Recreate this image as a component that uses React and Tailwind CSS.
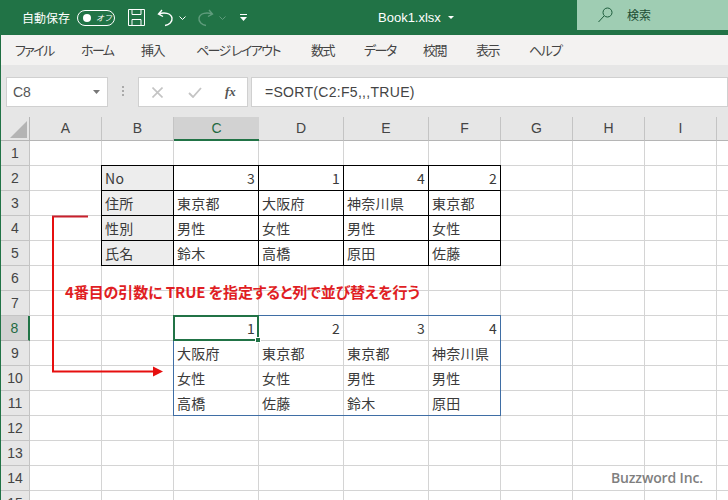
const COLS = ['A', 'B', 'C', 'D', 'E', 'F', 'G', 'H', 'I', '']
const ROWS = [1, 2, 3, 4, 5, 6, 7, 8, 9, 10, 11, 12, 13, 14, 15]
const TABS = [
  { label: 'ファイル', w: 'w-[38px]' },
  { label: 'ホーム', w: 'w-[32px]' },
  { label: '挿入', w: 'w-[27px]' },
  { label: 'ページ レイアウト', w: 'w-[87px]' },
  { label: '数式', w: 'w-[25px]' },
  { label: 'データ', w: 'w-[31px]' },
  { label: '校閲', w: 'w-[25px]' },
  { label: '表示', w: 'w-[25px]' },
  { label: 'ヘルプ', w: 'w-[32px]' },
]
const GRID = 'grid grid-cols-[29px_72px_72px_85px_85px_85px_72px_72px_72px_72px_12px] grid-rows-[24px_repeat(15,25px)]'

const CELLS = {
  '2-B': 'No', '2-C': 3, '2-D': 1, '2-E': 4, '2-F': 2,
  '3-B': '住所', '3-C': '東京都', '3-D': '大阪府', '3-E': '神奈川県', '3-F': '東京都',
  '4-B': '性別', '4-C': '男性', '4-D': '女性', '4-E': '男性', '4-F': '女性',
  '5-B': '氏名', '5-C': '鈴木', '5-D': '高橋', '5-E': '原田', '5-F': '佐藤',
  '8-C': 1, '8-D': 2, '8-E': 3, '8-F': 4,
  '9-C': '大阪府', '9-D': '東京都', '9-E': '東京都', '9-F': '神奈川県',
  '10-C': '女性', '10-D': '女性', '10-E': '男性', '10-F': '男性',
  '11-C': '高橋', '11-D': '佐藤', '11-E': '鈴木', '11-F': '原田',
}

function Cell({ row, col }) {
  const value = CELLS[`${row}-${col}`]
  const inTop = row >= 2 && row <= 5 && ['B', 'C', 'D', 'E', 'F'].includes(col)
  const isLabel = inTop && col === 'B'
  return (
    <div
      className={`flex items-center overflow-hidden whitespace-nowrap px-[3px] text-[14px] tracking-[0.3px] text-[#3a3a3a] ${
        inTop ? 'border-r border-b border-black' : 'border-r border-b border-[#d4d4d4]'
      } ${isLabel ? 'bg-[#ededed]' : 'bg-white'} ${typeof value === 'number' ? 'justify-end' : ''}`}
    >
      {value}
    </div>
  )
}

function TitleBar() {
  return (
    <div className="flex h-[35px] items-center bg-[#217346] text-white">
      <span className="ml-[22px] w-[48px] whitespace-nowrap text-[12px] [font-feature-settings:'palt']">自動保存</span>
      <div className="ml-[7px] flex h-[16px] w-[38px] items-center rounded-full border border-white pl-[5px]">
        <span className="h-[8px] w-[8px] rounded-full bg-white" />
        <span className="ml-[5px] text-[8px] italic leading-none">オフ</span>
      </div>
      <svg className="ml-[13px]" width="17" height="17" viewBox="0 0 17 17" fill="none" stroke="#fff" strokeWidth="1">
        <path d="M.5.5h16v16H.5zM4 .5v5h9v-5M4 16.5v-6h9v6" />
      </svg>
      <svg className="ml-[12px]" width="17" height="18" viewBox="0 0 17 18" fill="none" stroke="#fff" strokeWidth="1.4">
        <path d="M5 1 1.500 5 6 7.500M2 5c5-2 12-1 13 4 .6 4-3 7-7 7.500" />
      </svg>
      <svg className="ml-[5px]" width="7" height="4" viewBox="0 0 7 4" fill="none" stroke="#fff">
        <path d="m.5.5 3 3 3-3" />
      </svg>
      <svg className="ml-[11px]" width="17" height="18" viewBox="0 0 17 18" fill="none" stroke="#5f9c7c" strokeWidth="1.4">
        <path d="M12 1l3.500 4L11 7.500M15 5C10 3 3 4 2 9c-.6 4 3 7 7 7.500" />
      </svg>
      <svg className="ml-[5px]" width="7" height="4" viewBox="0 0 7 4" fill="none" stroke="#5f9c7c">
        <path d="m.5.5 3 3 3-3" />
      </svg>
      <svg className="ml-[14px]" width="7" height="7" viewBox="0 0 7 7" fill="#fff">
        <path d="M0 0h7v1H0zM0 3h7L3.500 7z" />
      </svg>
      <span className="ml-[131px] font-['Liberation_Sans',sans-serif] text-[13px]">Book1.xlsx</span>
      <svg className="ml-[7px]" width="6" height="3" viewBox="0 0 6 3" fill="#fff">
        <path d="M0 0h6L3 3z" />
      </svg>
      <div className="mb-[5px] ml-[123px] flex h-[30px] flex-1 items-center self-end bg-[#9fcdb3] pl-[21px] text-[#1d4d34]">
        <svg width="15" height="16" viewBox="0 0 15 16" fill="none" stroke="#1d5c3c" strokeWidth="1">
          <circle cx="9.500" cy="5.500" r="4.500" />
          <path d="M6 9 .5 15" />
        </svg>
        <span className="ml-[14px] text-[12px]">検索</span>
      </div>
    </div>
  )
}

function TabBar() {
  return (
    <div className="flex h-[30px] items-center gap-[28px] bg-[#f3f2f1] pl-[14px] text-[13px] text-[#444] shadow-[0_2px_3px_rgba(0,0,0,0.12)] [font-feature-settings:'palt']">
      {TABS.map((t) => (
        <span key={t.label} className={`${t.w} shrink-0 whitespace-nowrap tracking-[-1.6px]`}>
          {t.label}
        </span>
      ))}
    </div>
  )
}

function FormulaBar() {
  return (
    <div className="flex h-[52px] items-start bg-[#e6e6e6] pl-[5px] pt-[12px]">
      <div className="flex h-[30px] w-[102px] items-center justify-between border border-[#d0d0d0] bg-white pl-[6px] pr-[7px] font-['Liberation_Sans',sans-serif] text-[14px] text-[#555]">
        C8
        <svg width="7" height="4" viewBox="0 0 7 4" fill="#777">
          <path d="M0 0h7L3.500 4z" />
        </svg>
      </div>
      <div className="ml-[14px] mt-[9px] flex flex-col gap-[2px]">
        <span className="h-[2px] w-[2px] bg-[#aaa]" />
        <span className="h-[2px] w-[2px] bg-[#aaa]" />
        <span className="h-[2px] w-[2px] bg-[#aaa]" />
      </div>
      <div className="ml-[14px] flex h-[30px] w-[110px] items-center border border-[#d0d0d0] bg-white">
        <svg className="ml-[13px]" width="11" height="11" viewBox="0 0 11 11" stroke="#c4c4c4" strokeWidth="1.6">
          <path d="m.5.500 10 10M10.500.5l-10 10" />
        </svg>
        <svg className="ml-[25px]" width="14" height="11" viewBox="0 0 14 11" fill="none" stroke="#c4c4c4" strokeWidth="1.8">
          <path d="m1 6 4 4 8-9" />
        </svg>
        <span className="ml-[23px] font-['Liberation_Serif',serif] text-[13px] font-bold italic text-[#555]">fx</span>
      </div>
      <div className="ml-[3px] flex h-[30px] flex-1 items-center border border-[#d0d0d0] bg-white pl-[13px] font-['Liberation_Sans',sans-serif] text-[14px] tracking-[0.3px] text-[#444]">
        =SORT(C2:F5,,,TRUE)
      </div>
    </div>
  )
}

function Sheet() {
  return (
    <div className="relative pl-[1px]">
      <div className={GRID}>
        <div className="flex items-end justify-end border-r border-b border-[#b5b5b5] bg-[#e6e6e6] p-[2px]">
          <svg width="17" height="17" viewBox="0 0 17 17" fill="#b4b4b4">
            <path d="M17 0v17H0z" />
          </svg>
        </div>
        {COLS.map((c) => (
          <div
            key={c}
            className={`flex items-center justify-center border-b font-['Liberation_Sans',sans-serif] text-[14px] ${
              c === 'C'
                ? 'border-b-2 border-b-[#217346] bg-[#d2d2d2] text-[#1f6a42]'
                : 'border-r border-b-[#b5b5b5] border-r-[#c4c4c4] bg-[#e6e6e6] text-[#444]'
            }`}
          >
            {c}
          </div>
        ))}
        {ROWS.map((r) => (
          <div key={r} className="contents">
            <div
              className={`flex items-center justify-center font-['Liberation_Sans',sans-serif] text-[14px] ${
                r === 8
                  ? 'border-r-2 border-b border-r-[#217346] border-b-[#b5b5b5] bg-[#d2d2d2] text-[#1f6a42]'
                  : 'border-r border-b border-[#c4c4c4] bg-[#e6e6e6] text-[#444]'
              }`}
            >
              {r}
            </div>
            {COLS.map((c) => (
              <Cell key={c} row={r} col={c} />
            ))}
          </div>
        ))}
      </div>

      {/* table outline, spill range and active cell sit over the cells */}
      <div className={`pointer-events-none absolute top-0 left-[1px] ${GRID}`}>
        <div className="col-start-3 col-end-8 row-start-3 row-end-7 -mt-px -ml-px border-t border-l border-black" />
        <div className="col-start-4 col-end-8 row-start-9 row-end-13 -mt-px -ml-px border border-[#3f6ea5]" />
        <div className="relative col-start-4 col-end-5 row-start-9 row-end-10 -mt-px -ml-px border-2 border-[#217346]">
          <span className="absolute -right-[4px] -bottom-[4px] h-[6px] w-[6px] border border-white bg-[#217346]" />
        </div>
      </div>

      <svg className="pointer-events-none absolute top-0 left-0" width="728" height="383" viewBox="0 0 728 383" fill="none">
        <path d="M88 99.500H53V254" stroke="#c9202c" strokeWidth="2" />
        <path d="M53 100v154.500h100" stroke="#e60f0f" strokeWidth="2" />
        <path d="M153 249.500l10 5-10 5z" fill="#e60f0f" />
      </svg>
      <span className="absolute top-[164px] left-[65px] text-[15px] font-bold tracking-[-0.1px] whitespace-nowrap text-[#e01e24] [font-feature-settings:'palt']">
        4番目の引数に TRUE を指定すると列で並び替えを行う
      </span>
      <span className="absolute top-[350px] left-[611px] font-['Open_Sans',sans-serif] text-[14px] font-semibold tracking-[-0.15px] whitespace-nowrap text-[#7f7f7f]">
        Buzzword Inc.
      </span>
    </div>
  )
}

export default function App() {
  return (
    <div className="h-[500px] w-[728px] overflow-hidden bg-white font-['Noto_Sans_CJK_JP',sans-serif]">
      <TitleBar />
      <div className="border-l border-[#217346]">
        <TabBar />
        <FormulaBar />
      </div>
      <div className="relative">
        <span className="absolute top-0 left-0 z-10 h-[383px] w-[1px] bg-[#217346]" />
        <Sheet />
      </div>
    </div>
  )
}
